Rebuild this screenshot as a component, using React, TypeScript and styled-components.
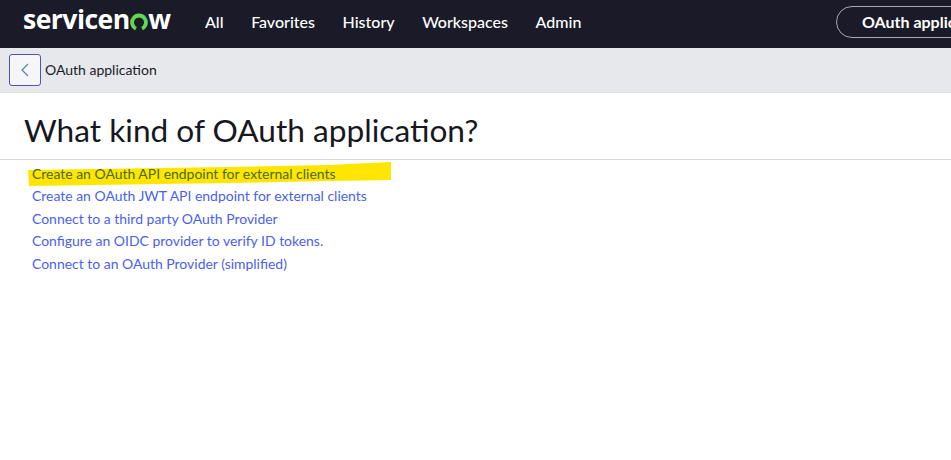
import React from "react";
import styled, { createGlobalStyle } from "styled-components";

const Global = createGlobalStyle`
  html, body { margin: 0; padding: 0; background: #fff; overflow: hidden; }
  body { font-family: Lato, "Liberation Sans", sans-serif; }
`;
const Page = styled.div`
  width: 951px;
  height: 460px;
  overflow: hidden;
  display: flex;
  flex-direction: column;
`;
const TopBar = styled.header`
  height: 48px;
  flex: none;
  box-sizing: border-box;
  background: #1a1a28;
  display: flex;
  align-items: center;
  padding: 0 0 5px 23px;
  color: #fff;
  white-space: nowrap;
`;
const Logo = styled.div`
  width: 148px;
  flex: none;
  display: flex;
  align-items: center;
  font-family: "Open Sans", sans-serif;
  font-weight: 700;
  font-size: 26.6px;
  letter-spacing: -0.55px;
  line-height: 30px;
  margin-top: -5px;
  color: #fff;
`;
const LogoRing = styled.svg`
  width: 18px;
  height: 18px;
  flex: none;
  margin: 5px 0 0 0.5px;
`;
const Nav = styled.nav`
  display: flex;
  gap: 27.6px;
  margin-left: 34px;
  font-size: 16px;
  font-weight: 500;
`;
const NavItem = styled.span`
  color: #fff;
`;
const Pill = styled.div`
  margin-left: auto;
  width: 150px;
  margin-right: -35px;
  height: 32px;
  box-sizing: border-box;
  border: 1px solid #a9a9b3;
  border-radius: 16px;
  display: flex;
  align-items: center;
  padding-left: 25px;
  font-size: 16px;
  font-weight: 700;
  color: #fff;
  overflow: hidden;
`;
const SubBar = styled.div`
  height: 45px;
  flex: none;
  box-sizing: border-box;
  background: #e7e8ec;
  border-bottom: 1px solid #dfe0e4;
  display: flex;
  align-items: center;
  padding-left: 9px;
  gap: 4px;
`;
const BackButton = styled.button`
  width: 32px;
  height: 32px;
  padding: 0;
  box-sizing: border-box;
  border: 1px solid #4f52bd;
  border-radius: 3px;
  background: #f6f6f9;
  display: flex;
  align-items: center;
  justify-content: center;
`;
const SubTitle = styled.span`
  font-size: 14px;
  color: #1a1a28;
  margin-top: -2px;
`;
const TitleRow = styled.div`
  height: 67px;
  flex: none;
  box-sizing: border-box;
  border-bottom: 1px solid #d8d8d8;
  display: flex;
  align-items: center;
  padding-left: 24px;
`;
const Title = styled.h1`
  margin: 0;
  font-size: 31.65px;
  font-weight: 400;
  color: #17171f;
  line-height: 40px;
  margin-top: 7px;
`;
const LinkList = styled.div`
  position: relative;
  display: flex;
  flex-direction: column;
  padding: 2.7px 0 0 32px;
`;
const Highlight = styled.svg`
  position: absolute;
  left: 28px;
  top: 1px;
  width: 364px;
  height: 26px;
`;
const OptionLink = styled.a<{ $marked?: boolean }>`
  position: relative;
  display: block;
  height: 22.5px;
  line-height: 22.5px;
  font-size: 13.96px;
  color: ${(p) => (p.$marked ? "#4a6a1a" : "#4a5ff0")};
  text-decoration: none;
`;

const links = [
  "Create an OAuth JWT API endpoint for external clients",
  "Connect to a third party OAuth Provider",
  "Configure an OIDC provider to verify ID tokens.",
  "Connect to an OAuth Provider (simplified)",
];

export default function App() {
  return (
    <Page>
      <Global />
      <TopBar>
        <Logo>
          servicen
          <LogoRing viewBox="0 0 18 18">
            <path d="M6 15.6 A6.9 6.9 0 1 1 12 15.6" fill="none" stroke="#62d84e" strokeWidth="3.8" />
          </LogoRing>
          w
        </Logo>
        <Nav>
          {["All", "Favorites", "History", "Workspaces", "Admin"].map((n) => (
            <NavItem key={n}>{n}</NavItem>
          ))}
        </Nav>
        <Pill>OAuth application</Pill>
      </TopBar>
      <SubBar>
        <BackButton aria-label="Back">
          <svg width="10" height="16" viewBox="0 0 10 16">
            <path d="M8 2 L2 8 L8 14" fill="none" stroke="#5b78c8" strokeWidth="1.2" />
          </svg>
        </BackButton>
        <SubTitle>OAuth application</SubTitle>
      </SubBar>
      <TitleRow>
        <Title>What kind of OAuth application?</Title>
      </TitleRow>
      <LinkList>
        <Highlight viewBox="0 0 364 26">
          <path d="M0 9 L200 6 L300 4 L363 1 L363 19 L300 20 L200 22 L1 25 Z" fill="#ffe600" />
        </Highlight>
        <OptionLink $marked>Create an OAuth API endpoint for external clients</OptionLink>
        {links.map((l) => (
          <OptionLink key={l}>{l}</OptionLink>
        ))}
      </LinkList>
    </Page>
  );
}
